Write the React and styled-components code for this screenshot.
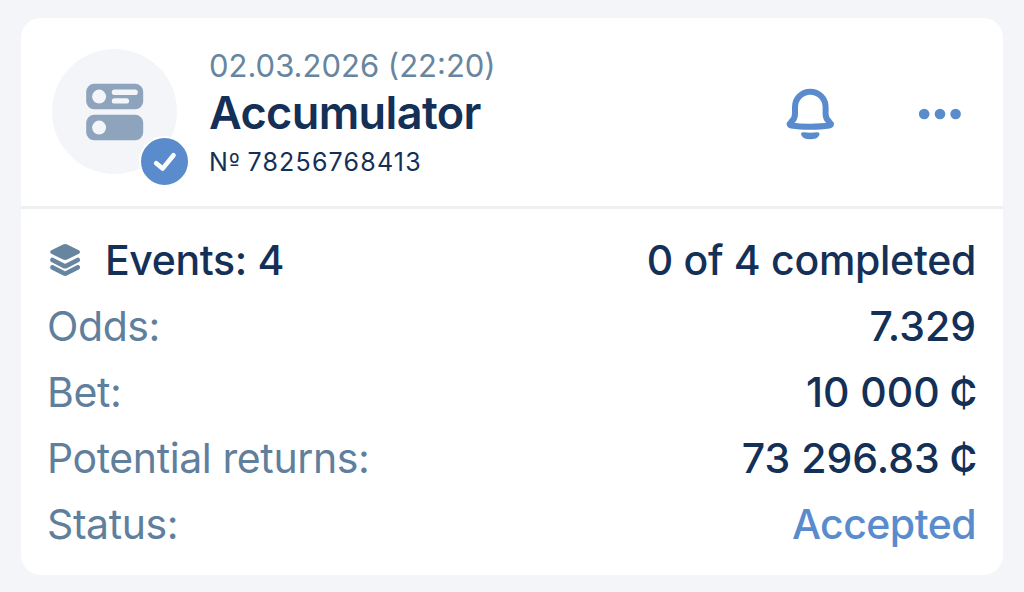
import React from "react";
import styled, { createGlobalStyle } from "styled-components";

const GlobalStyle = createGlobalStyle`
  * {
    box-sizing: border-box;
  }
  body {
    margin: 0;
    background-color: #f3f5f9;
    font-family: Inter, "Liberation Sans", sans-serif;
    color: #143057;
  }
`;

const Page = styled.div`
  height: 592px;
  padding: 18px 21px 17px;
`;
const Card = styled.article`
  height: 557px;
  background-color: #fff;
  border-radius: 20px;
  overflow: hidden;
`;
const Header = styled.header`
  display: flex;
  align-items: flex-start;
  height: 191px;
  padding: 28px 42px 0 31px;
  border-bottom: 3px solid #edeff1;
`;
const Avatar = styled.div`
  position: relative;
  display: flex;
  flex: none;
  align-items: center;
  justify-content: center;
  width: 125px;
  height: 125px;
  margin: 3px 32px 0 0;
  border-radius: 50%;
  background-color: #f3f5f9;
`;
const Badge = styled.span`
  position: absolute;
  right: -13px;
  bottom: -13px;
  display: flex;
  width: 51px;
  height: 51px;
  border: 2px solid #fff;
  border-radius: 50%;
  background-color: #5a8ccd;
`;
const Info = styled.div`
  flex: 1;
  padding-top: 1px;
  white-space: nowrap;
`;
const Date = styled.div`
  font-size: 31px;
  line-height: 38px;
  color: #67859f;
`;
const Title = styled.h1`
  margin: 0;
  font-size: 45px;
  font-weight: 560;
  line-height: 56px;
  letter-spacing: -0.6px;
`;
const Number = styled.div`
  font-size: 25px;
  line-height: 43px;
  letter-spacing: 1.2px;
`;
const Ordinal = styled.span`
  font-family: "DejaVu Sans Condensed", "DejaVu Sans", sans-serif;
  line-height: 1;
  letter-spacing: -0.5px;
`;
const IconButton = styled.button`
  display: flex;
  margin: ${(props) => props.$margin};
  padding: 0;
  border: 0;
  background: none;
  color: #5a8ccd;
`;
const Body = styled.div`
  padding: 18px 27px 0 26px;
`;
const Row = styled.div`
  display: flex;
  align-items: center;
  justify-content: space-between;
  height: 66px;
  font-size: 41px;
  line-height: 66px;
  white-space: nowrap;
`;
const Label = styled.span`
  display: flex;
  align-items: center;
  gap: 24px;
  font-weight: ${(props) => (props.$strong ? 500 : 400)};
  letter-spacing: ${(props) => (props.$strong ? "-0.35px" : "-0.4px")};
  color: ${(props) => (props.$strong ? "#143057" : "#5f7f9d")};
`;
const Value = styled.span`
  font-weight: 500;
  letter-spacing: ${(props) => props.$spacing || "-0.3px"};
  color: ${(props) => (props.$accent ? "#5a8ccd" : "#143057")};
`;
const Currency = styled.span`
  margin-left: 10px;
  font-size: 37px;
  font-weight: 600;
  line-height: 1;
  vertical-align: 1px;
  letter-spacing: -1px;
`;

const CouponIcon = () => (
  <svg width="58" height="58" viewBox="0 0 58 58">
    <rect x="0.2" y="0.8" width="57" height="25.5" rx="8" fill="#8da4bc" />
    <rect x="0.2" y="31.8" width="57" height="25.5" rx="8" fill="#8da4bc" />
    <g fill="#f3f5f9">
      <circle cx="13.1" cy="13.6" r="7" />
      <circle cx="13.1" cy="44.6" r="7" />
      <rect x="25.8" y="6.4" width="26" height="5.6" rx="2.8" />
      <rect x="25.8" y="15.2" width="17.3" height="5.4" rx="2.7" />
    </g>
  </svg>
);

const CheckIcon = () => (
  <svg width="47" height="47" viewBox="0 0 47 47" fill="none">
    <path
      d="M15.2 25.2 21.6 30.6 32.5 17.2"
      stroke="#fff"
      strokeWidth="4.6"
      strokeLinecap="round"
      strokeLinejoin="round"
    />
  </svg>
);

const BellIcon = () => (
  <svg width="50" height="52" viewBox="0 0 50 52" fill="none">
    <path
      d="M10 19a15.3 15.3 0 0 1 30.600 0v7c0 3.800 1.300 6 4 8.200 2.200 1.900 1.500 3-.3 3.300-5.200.8-11.800 1.200-19 1.200s-13.800-.4-19-1.200c-1.800-.3-2.500-1.400-.3-3.300C8.700 32 10 29.800 10 26Z"
      stroke="currentColor"
      strokeWidth="6"
      strokeLinejoin="round"
    />
    <path
      d="M18.4 44.300c4.500.5 9.300.5 13.800 0 2-.2 2.900 1.200 2 3-1.500 3-4.600 4-8.900 4s-7.400-1-8.900-4c-.9-1.800 0-3.200 2-3Z"
      fill="currentColor"
    />
  </svg>
);

const MoreIcon = () => (
  <svg width="42" height="12" viewBox="0 0 42 12" fill="currentColor">
    <circle cx="5.2" cy="6" r="5.3" />
    <circle cx="21" cy="6" r="5.3" />
    <circle cx="36.6" cy="6" r="5.3" />
  </svg>
);

const LayersIcon = () => (
  <svg
    width="34"
    height="34"
    viewBox="-1 0 34 34"
    fill="none"
    stroke="#67859f"
    strokeWidth="4.6"
    strokeLinecap="round"
    strokeLinejoin="round"
  >
    <path
      d="M15.9 3.300a3 3 0 0 1 2.400 0L29.900 9 18.300 14.700a3 3 0 0 1-2.400 0L4.300 9Z"
      fill="#67859f"
      strokeWidth="4"
    />
    <path d="M4.400 17l11.500 5.900a2.600 2.600 0 0 0 2.400 0l11.500-5.900" />
    <path d="M4.400 24.400l11.500 5.900a2.600 2.600 0 0 0 2.400 0l11.500-5.900" />
  </svg>
);

const rows = [
  { label: "Odds:", value: "7.329", spacing: "0" },
  { label: "Bet:", value: "10 000", currency: "₵", spacing: "0" },
  {
    label: "Potential returns:",
    value: "73 296.83",
    currency: "₵",
    spacing: "0",
  },
  { label: "Status:", value: "Accepted", accent: true, spacing: "-0.55px" },
];

const App = () => {
  return (
    <Page>
      <GlobalStyle />
      <Card>
        <Header>
          <Avatar>
            <CouponIcon />
            <Badge>
              <CheckIcon />
            </Badge>
          </Avatar>
          <Info>
            <Date>02.03.2026 (22:20)</Date>
            <Title>Accumulator</Title>
            <Number>
              N<Ordinal>º</Ordinal> 78256768413
            </Number>
          </Info>
          <IconButton $margin="42px 84px 0 0" aria-label="Notifications">
            <BellIcon />
          </IconButton>
          <IconButton $margin="62px 0 0" aria-label="More">
            <MoreIcon />
          </IconButton>
        </Header>
        <Body>
          <Row>
            <Label $strong>
              <LayersIcon />
              Events: 4
            </Label>
            <Value>0 of 4 completed</Value>
          </Row>
          {rows.map((row) => (
            <Row key={row.label}>
              <Label>{row.label}</Label>
              <Value $accent={row.accent} $spacing={row.spacing}>
                {row.value}
                {row.currency && <Currency>{row.currency}</Currency>}
              </Value>
            </Row>
          ))}
        </Body>
      </Card>
    </Page>
  );
};

export default App;
